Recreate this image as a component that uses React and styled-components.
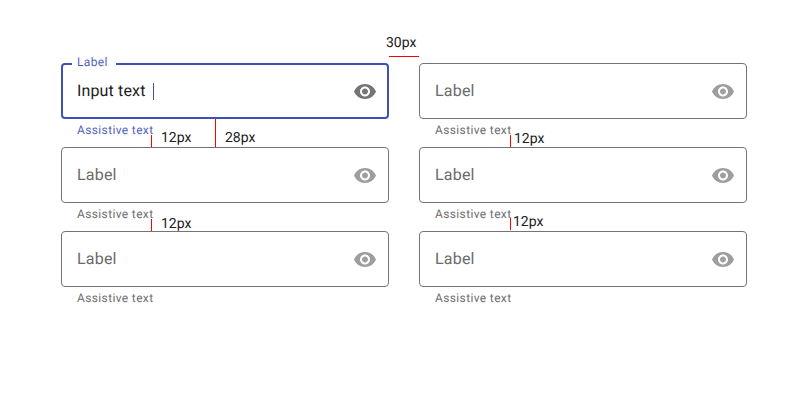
import React from 'react';
import styled, { createGlobalStyle } from 'styled-components';

const GlobalStyle = createGlobalStyle`
  * { box-sizing: border-box; }
  body { margin: 0; background: #fff; font-family: Roboto, sans-serif; text-rendering: geometricPrecision; }
`;

const Page = styled.main`
  position: relative;
  width: 790px;
  height: 417px;
  padding: 63px 0 0 61px;
  overflow: hidden;
`;

const FieldGrid = styled.div`
  display: grid;
  grid-template-columns: 328px 328px;
  column-gap: 30px;
  grid-auto-rows: 84px;
`;

const Field = styled.div`
  position: relative;
`;

const InputBox = styled.div`
  display: flex;
  align-items: center;
  justify-content: space-between;
  height: 56px;
  padding: ${(p) => (p.$active ? '0 10px 0 14px' : '0 11px 0 15px')};
  border: ${(p) => (p.$active ? '2px solid #3f51b5' : '1px solid #747474')};
  border-radius: 4px;
`;

const Value = styled.span`
  display: flex;
  align-items: center;
  font-size: 16px;
  line-height: 24px;
  letter-spacing: ${(p) => (p.$active ? '0.15px' : '0.2px')};
  color: ${(p) => (p.$active ? '#212121' : '#6a6a6a')};
`;

const Caret = styled.i`
  width: 1px;
  height: 17px;
  margin: 1px 0 0 7px;
  background: #3f51b5;
`;

const FloatingLabel = styled.span`
  position: absolute;
  left: 11px;
  top: -9px;
  width: 44px;
  padding-left: 5px;
  background: #fff;
  color: #5364be;
  font-size: 12px;
  line-height: 16px;
  letter-spacing: 0.36px;
`;

const Assistive = styled.div`
  padding: 3px 0 0 16px;
  font-size: 12px;
  line-height: 16px;
  letter-spacing: 0.36px;
  color: ${(p) => (p.$active ? '#5364be' : '#6e6e6e')};
`;

const EyeIcon = styled.svg`
  display: block;
  width: 24px;
  height: 24px;
  fill: ${(p) => (p.$active ? '#757575' : '#9e9e9e')};
`;

const Measure = styled.span`
  position: absolute;
  left: ${(p) => p.$x}px;
  top: ${(p) => p.$y}px;
  width: ${(p) => p.$w || 1}px;
  height: ${(p) => p.$h || 1}px;
  background: #f00;
`;

const MeasureText = styled.span`
  position: absolute;
  left: ${(p) => p.$x}px;
  top: ${(p) => p.$y}px;
  font-size: 14px;
  line-height: 16px;
  color: #212121;
  white-space: nowrap;
`;

const measures = [
  { x: 389, y: 56, w: 30, text: '30px', tx: 386, ty: 35 },
  { x: 151, y: 135, h: 12, text: '12px', tx: 161, ty: 130 },
  { x: 215, y: 119, h: 28, text: '28px', tx: 225, ty: 130 },
  { x: 510, y: 135, h: 12, text: '12px', tx: 514, ty: 131 },
  { x: 151, y: 219, h: 12, text: '12px', tx: 161, ty: 216 },
  { x: 510, y: 218, h: 12, text: '12px', tx: 513, ty: 214 },
];

function TextField({ active }) {
  return (
    <Field>
      {active && <FloatingLabel>Label</FloatingLabel>}
      <InputBox $active={active}>
        <Value $active={active}>
          {active ? 'Input text' : 'Label'}
          {active && <Caret />}
        </Value>
        <EyeIcon $active={active} viewBox="0 -0.5 24 24">
          <path d="M12 4.5C7 4.5 2.73 7.61 1 12c1.73 4.39 6 7.5 11 7.5s9.27-3.11 11-7.5c-1.73-4.39-6-7.5-11-7.5zM12 17c-2.76 0-5-2.24-5-5s2.24-5 5-5 5 2.24 5 5-2.24 5-5 5zm0-8c-1.66 0-3 1.34-3 3s1.34 3 3 3 3-1.34 3-3-1.34-3-3-3z" />
        </EyeIcon>
      </InputBox>
      <Assistive $active={active}>Assistive text</Assistive>
    </Field>
  );
}

export default function App() {
  return (
    <Page>
      <GlobalStyle />
      <FieldGrid>
        {[0, 1, 2, 3, 4, 5].map((i) => (
          <TextField key={i} active={i === 0} />
        ))}
      </FieldGrid>
      {measures.map((m, i) => (
        <React.Fragment key={i}>
          <Measure $x={m.x} $y={m.y} $w={m.w} $h={m.h} />
          <MeasureText $x={m.tx} $y={m.ty}>{m.text}</MeasureText>
        </React.Fragment>
      ))}
    </Page>
  );
}
